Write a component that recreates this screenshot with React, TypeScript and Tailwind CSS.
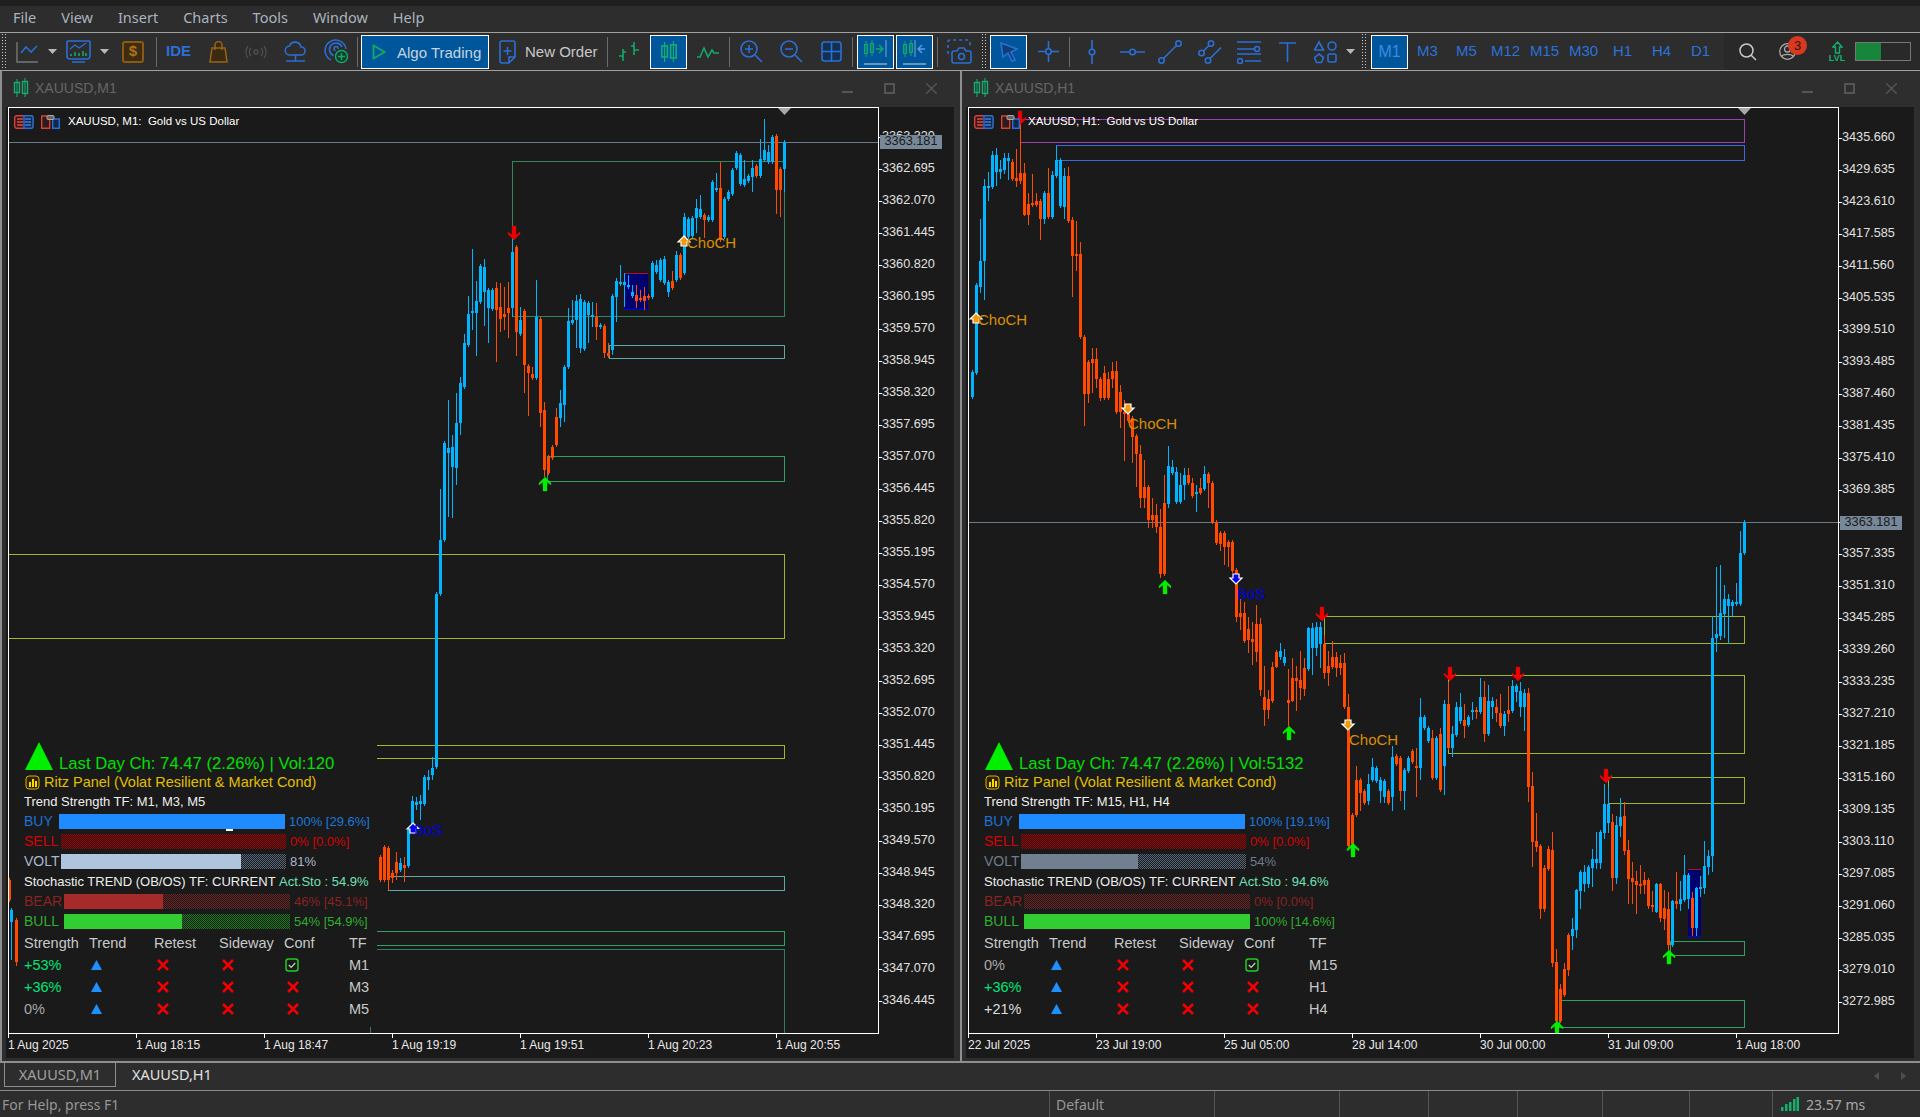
import type { ReactNode } from "react";

const BLUE = "#2a6fd6";
const GREEN = "#14a86a";
const ORANGE = "#9a6414";
const BULL = "#00b4ff";
const BEAR = "#ff4a00";
const OLIVE = "#9ab82e";
const SEA = "#2fa060";
const CADET = "#5fa8a8";

// [bodyTop, bodyBottom, bull?, wickTop, wickBottom] in page pixels, spaced 4px apart
const m1Candles: number[][] = [
  [857,880,0],[847,880,0],[848,880,0,0,890],[873,878,0,870,883],[862,873,0,852,880],[863,870,1,858,872],[865,868,0,857,882],[830,866,1],
  [801,826,1,796,828],[802,805,1,797,810],[801,804,1,795,820],[777,804,1],[777,780,1,770,790],[768,775,1,757,780],[594,767,1],[540,594,1,489,0],
  [443,540,1],[448,453,1,400,517],[447,467,1,435,518],[423,468,1,393,485],[383,423,1,377,435],[343,387,1,334,0],[314,345,1,296,0],[311,313,1,249,330],
  [301,313,1,281,356],[266,302,1],[267,292,1,259,326],[290,308,1,0,343],[290,309,1],[288,310,0,282,362],[307,319,0,283,332],[314,317,0,287,330],
  [308,313,0,282,338],[252,308,1,239,317],[247,332,0,0,356],[320,334,1,307,0],[311,365,0,0,393],[366,373,0,0,416],[374,378,0,367,0],[317,378,1,280,0],
  [319,413,0,0,427],[410,470,0,402,477],[457,473,0],[447,458,0],[417,445,0,408,0],[403,418,1,390,427],[367,405,1,0,422],[321,367,1,308,0],
  [320,323,1,300,0],[301,320,1,295,348],[299,348,1,294,353],[302,349,1],[303,315,1,0,343],[315,317,1,302,327],[317,327,0,303,340],[325,327,1],
  [326,353,0,0,358],[353,356,0,343,0],[296,350,1,0,355],[281,297,1,278,322],[282,284,1,265,0],[282,285,1,273,307],[285,287,1,275,0],[292,296,1,285,0],
  [295,301,0,285,308],[298,300,0,290,0],[296,301,0,287,310],[296,298,0],[263,297,1],[265,272,1,260,0],[260,280,1],[259,283,1,256,0],
  [282,292,1,0,297],[281,288,0,271,0],[255,280,1,251,0],[255,278,0],[217,273,1,213,0],[219,237,1],[218,236,1,0,0],[208,218,1,199,233],
  [209,217,1,195,0],[215,220,0,0,238],[217,220,1],[182,220,1],[188,190,1,173,0],[188,240,0,162,0],[199,237,1],[192,199,1],
  [170,194,1],[153,168,1],[155,184,1],[179,185,1,160,0],[176,181,1],[168,177,1,160,192],[166,176,0],[159,176,1,139,0],
  [150,160,1,119,0],[152,162,1,145,0],[137,162,1],[136,190,0,0,214],[169,190,0,0,217],[142,169,1,0,192],
];

const h1Candles: number[][] = [
  [372,397,1],[285,373,1],[261,287,1,219,293],[186,261,1,179,300],[186,187,1,172,201],[155,187,1,151,0],[155,172,1,148,186],[169,172,1,160,179],
  [158,170,1,153,174],[158,161,1,153,180],[162,179,0,159,181],[178,181,0,149,187],[173,181,0,123,184],[173,215,0,163,216],[204,215,0,193,225],[203,205,0,174,0],
  [201,205,0,193,0],[201,219,0,0,240],[193,219,1,0,224],[193,217,0,168,0],[175,217,1,171,0],[160,176,1,146,0],[160,206,1],[176,207,1,168,219],
  [176,221,0,167,0],[220,256,0,217,297],[254,256,0,221,271],[254,337,0,242,0],[337,394,0,0,426],[362,394,0,0,403],[359,363,0,348,393],[359,379,0,348,388],
  [379,398,0,0,401],[373,398,0,366,0],[379,398,0,372,0],[371,379,0,362,388],[371,412,0,361,0],[392,412,0,385,428],[412,414,0,400,461],[414,421,0,405,0],
  [418,437,0,0,463],[436,454,0,0,487],[454,498,0,445,508],[487,498,0,460,508],[487,520,0,485,528],[515,520,0,498,528],[515,527,0,504,533],[527,574,0,509,578],
  [503,574,0,475,0],[466,504,1,446,508],[467,473,1,460,0],[472,502,1,467,0],[485,502,1,473,0],[475,485,1,468,500],[475,483,0,468,0],[483,496,0,478,0],
  [492,494,1,485,512],[488,493,0,478,0],[474,489,1,466,0],[474,483,0,472,508],[483,522,0],[522,543,0],[533,544,0,0,551],[533,547,0,0,565],
  [542,547,0,540,567],[542,571,0],[570,617,0,0,622],[613,617,0,598,630],[613,641,0,602,0],[629,640,0,617,653],[639,642,0,622,665],[624,652,0,605,662],
  [624,690,0,618,696],[697,710,0,666,726],[699,710,0,690,719],[667,701,0,662,0],[652,667,0,0,668],[651,657,1,643,660],[657,663,1,649,666],[700,703,0,669,726],
  [678,701,0,658,702],[678,681,0,666,711],[680,688,0,651,700],[668,689,0,658,696],[628,669,1,627,0],[628,648,1,623,675],[627,648,1,622,656],[627,644,1,622,668],
  [644,673,0,635,679],[666,673,0,651,686],[657,667,0,641,0],[657,668,0,652,677],[663,668,0,655,675],[663,707,0,653,0],[707,846,0,694,0],[815,844,0,0,852],
  [780,815,0,766,0],[780,793,0,0,811],[791,803,0],[784,801,1,774,805],[767,780,1,758,0],[768,781,1],[780,791,1,777,803],[781,797,1,0,803],
  [791,803,0],[757,797,1,746,811],[756,764,0],[758,791,0,0,801],[770,791,1,0,810],[758,771,1],[751,762,0],[766,768,0,748,797],
  [717,768,1,698,780],[717,728,1],[728,741,1],[738,778,0,730,0],[738,778,1],[734,790,0,728,0],[704,766,1,700,795],[704,748,0,682,0],
  [734,748,1,726,757],[707,735,1,702,0],[707,721,1,693,724],[720,726,0,704,738],[717,725,1,715,727],[710,711,1,702,720],[710,712,0,707,719],[697,712,1,678,714],
  [697,734,0,681,742],[701,734,1,685,0],[701,707,1,697,719],[707,713,0,699,722],[713,726,0,694,728],[714,726,1,711,736],[710,714,0,686,722],[686,711,1,680,0],
  [686,692,1,684,702],[691,707,1,682,717],[693,707,1,689,731],[693,787,0,688,802],[786,842,0,772,867],[841,847,0,813,852],[846,909,0,0,919],[868,909,0,865,912],
  [849,869,0,846,0],[850,963,0,832,967],[962,1021,0,949,0],[989,1021,0,984,1023],[969,995,0,963,0],[935,970,0,933,976],[929,936,1,918,950],[890,930,1,889,938],
  [872,891,1,870,909],[872,884,1,865,892],[867,884,1,865,888],[859,868,1,849,887],[859,863,1,832,869],[832,863,1,0,869],[804,833,1,784,839],[804,823,1,787,833],
  [822,878,0,814,891],[825,878,1,816,884],[817,826,1,798,837],[816,851,0,802,855],[850,879,0,840,904],[878,882,0,862,904],[881,885,0,871,914],[884,885,0,865,894],
  [880,885,0,872,894],[880,906,0,0,909],[905,907,0,891,912],[884,912,1,883,913],[884,918,0,883,922],[908,919,0,890,930],[909,945,0,892,950],[901,945,1,900,947],
  [901,904,0,872,909],[899,904,1,881,911],[875,900,1,855,902],[875,899,1,0,909],[898,928,0,892,936],[888,928,1,887,936],[887,889,1,876,897],[866,888,1,841,894],
  [856,867,1,850,875],[638,856,1,616,872],[634,638,1,567,652],[613,636,1,565,640],[599,614,1,585,638],[599,606,1,594,644],[602,606,1,0,616],[602,604,1,583,0],
  [553,604,1,531,0],[522,553,1,520,555],
];

type Zone = [number, number, number, number, string];
type Marker = { x: number; y: number; kind: "up" | "down" | "bosUp" | "bosDown" | "chochUp" | "chochDown" };
type Label = { x: number; y: number; text: string; color: string };

const m1Zones: Zone[] = [
  [512, 161, 785, 316, "#34845c"],
  [609, 345, 785, 358, CADET],
  [547, 456, 785, 481, SEA],
  [2, 554, 785, 638, OLIVE],
  [370, 745, 785, 758, OLIVE],
  [388, 876, 785, 890, CADET],
  [370, 876, 388, 876, CADET],
  [370, 931, 785, 945, SEA],
  [370, 949, 785, 1040, "#2f7f5c"],
];

const h1Zones: Zone[] = [
  [1020, 119, 1745, 142, "#a040b0"],
  [1056, 145, 1745, 160, "#3f66e0"],
  [1324, 616, 1745, 643, OLIVE],
  [1448, 675, 1745, 753, OLIVE],
  [1608, 777, 1745, 803, OLIVE],
  [1670, 941, 1745, 955, SEA],
  [1559, 1000, 1745, 1027, SEA],
];

const m1Markers: Marker[] = [
  { x: 514, y: 226, kind: "down" },
  { x: 545, y: 477, kind: "up" },
  { x: 684, y: 236, kind: "chochUp" },
  { x: 413, y: 823, kind: "bosUp" },
];

const h1Markers: Marker[] = [
  { x: 1020, y: 111, kind: "down" },
  { x: 976, y: 313, kind: "chochUp" },
  { x: 1128, y: 404, kind: "chochDown" },
  { x: 1165, y: 580, kind: "up" },
  { x: 1236, y: 574, kind: "bosDown" },
  { x: 1322, y: 607, kind: "down" },
  { x: 1289, y: 726, kind: "up" },
  { x: 1348, y: 720, kind: "chochDown" },
  { x: 1353, y: 843, kind: "up" },
  { x: 1450, y: 667, kind: "down" },
  { x: 1518, y: 667, kind: "down" },
  { x: 1606, y: 769, kind: "down" },
  { x: 1557, y: 1021, kind: "up" },
  { x: 1669, y: 950, kind: "up" },
];

const m1Labels: Label[] = [
  { x: 687, y: 248, text: "ChoCH", color: "#d98e04" },
  { x: 414, y: 835, text: "BoS", color: "#0000e6" },
];

const h1Labels: Label[] = [
  { x: 978, y: 325, text: "ChoCH", color: "#d98e04" },
  { x: 1128, y: 429, text: "ChoCH", color: "#d98e04" },
  { x: 1349, y: 745, text: "ChoCH", color: "#d98e04" },
  { x: 1237, y: 599, text: "BoS", color: "#0000e6" },
];

const m1Prices = ["3363.320","3362.695","3362.070","3361.445","3360.820","3360.195","3359.570","3358.945","3358.320","3357.695","3357.070","3356.445","3355.820","3355.195","3354.570","3353.945","3353.320","3352.695","3352.070","3351.445","3350.820","3350.195","3349.570","3348.945","3348.320","3347.695","3347.070","3346.445"];
const h1Prices = ["3435.660","3429.635","3423.610","3417.585","3411.560","3405.535","3399.510","3393.485","3387.460","3381.435","3375.410","3369.385","3363.360","3357.335","3351.310","3345.285","3339.260","3333.235","3327.210","3321.185","3315.160","3309.135","3303.110","3297.085","3291.060","3285.035","3279.010","3272.985"];

function ArrowMark({ x, y, kind }: Marker) {
  if (kind === "up" || kind === "down") {
    const fill = kind === "up" ? "#00f000" : "#ee0000";
    const pts =
      kind === "up"
        ? `${x},${y} ${x + 6},${y + 6} ${x + 6},${y + 8} ${x + 2},${y + 5} ${x + 2},${y + 14} ${x - 2},${y + 14} ${x - 2},${y + 5} ${x - 6},${y + 8} ${x - 6},${y + 6}`
        : `${x - 2},${y} ${x + 2},${y} ${x + 2},${y + 9} ${x + 6},${y + 6} ${x + 6},${y + 8} ${x},${y + 14} ${x - 6},${y + 8} ${x - 6},${y + 6} ${x - 2},${y + 9}`;
    return <polygon points={pts} fill={fill} stroke={fill} strokeOpacity="0.3" />;
  }
  const fill = kind.startsWith("bos") ? "#0000ee" : "#f09a10";
  const up = kind.endsWith("Up");
  const pts = up
    ? `${x},${y} ${x + 6},${y + 6} ${x + 3},${y + 6} ${x + 3},${y + 10} ${x - 3},${y + 10} ${x - 3},${y + 6} ${x - 6},${y + 6}`
    : `${x - 3},${y} ${x + 3},${y} ${x + 3},${y + 4} ${x + 6},${y + 4} ${x},${y + 10} ${x - 6},${y + 4} ${x - 3},${y + 4}`;
  return <polygon points={pts} fill={fill} stroke="#ffffff" strokeWidth="1.2" />;
}

function CandleBar({ x, c }: { x: number; c: number[] }) {
  const color = c[2] ? BULL : BEAR;
  const top = c[3] || c[0] - 2;
  const bottom = c[4] || c[1] + 2;
  return (
    <g fill={color}>
      <rect x={x} y={top} width="1" height={bottom - top} />
      <rect x={x - 1} y={c[0]} width="3" height={Math.max(c[1] - c[0], 2)} />
    </g>
  );
}

function ChartDrawing(props: {
  left: number;
  start: number;
  bid: number;
  candles: number[][];
  extras?: number[][];
  zones: Zone[];
  box: number[];
  markers: Marker[];
  labels: Label[];
  peak: number;
}) {
  const { left, start, bid, candles, extras, zones, box, markers, labels, peak } = props;
  return (
    <svg
      width="869"
      height="925"
      viewBox={`${left} 108 869 925`}
      className="block"
      shapeRendering="crispEdges"
    >
      {zones.map((z, i) => (
        <rect key={i} x={z[0] + 0.5} y={z[1] + 0.5} width={z[2] - z[0] - 1} height={z[3] - z[1]} fill="none" stroke={z[4]} />
      ))}
      <rect x={left} y={bid} width="869" height="1" fill="#6d7b88" />
      <rect x={box[0]} y={box[1]} width={box[2] - box[0]} height={box[3] - box[1]} fill="#00006e" />
      <rect x={box[0]} y={box[1]} width={box[2] - box[0]} height="1" fill="#b01030" />
      <rect x={box[0]} y={box[3] - 1} width={box[2] - box[0]} height="1" fill="#0000e6" />
      {candles.map((c, i) => (
        <CandleBar key={i} x={start + 4 * i} c={c} />
      ))}
      {extras?.map((c, i) => (
        <CandleBar key={i} x={c[5]} c={c} />
      ))}
      <g shapeRendering="auto">
        <polygon points={`${peak - 7},108 ${peak + 6},108 ${peak - 0.5},115`} fill="#a8a8a8" />
        {markers.map((m, i) => (
          <ArrowMark key={i} {...m} />
        ))}
        {labels.map((l, i) => (
          <text key={i} x={l.x} y={l.y} fill={l.color} fontSize="15" fontFamily="Liberation Sans, sans-serif">
            {l.text}
          </text>
        ))}
      </g>
    </svg>
  );
}

function HeaderIcons() {
  return (
    <svg width="46" height="14" viewBox="0 0 46 14" className="shrink-0">
      <rect x="0.7" y="0.7" width="18" height="12.6" rx="2" fill="#321a1a" stroke="#d8403a" strokeWidth="1.4" />
      <path d="M10 0.7h7a2 2 0 012 2v8.6a2 2 0 01-2 2h-7z" fill="#14264a" stroke={BLUE} strokeWidth="1.4" />
      <path d="M3 4h6M3 7h6M3 10h6" stroke="#e8483e" strokeWidth="1.4" />
      <path d="M11 4h6M11 7h6M11 10h6" stroke="#3a82e6" strokeWidth="1.4" />
      <path d="M27.7 1h5l3 3v9.3h-8z" fill="#321a1a" stroke="#d8403a" strokeWidth="1.4" />
      <path d="M38.7 4h6.6v9.3h-6.6z" fill="#14264a" stroke={BLUE} strokeWidth="1.4" />
      <rect x="33" y="0.5" width="7" height="4" rx="1" fill="#666" stroke="#aaa" />
    </svg>
  );
}

const ditherRed = "bg-[conic-gradient(#a80000_25%,#1a1a1a_0_50%,#a80000_0_75%,#1a1a1a_0)] bg-[length:2px_2px]";
const ditherBrown = "bg-[conic-gradient(#6e2222_25%,#1a1a1a_0_50%,#6e2222_0_75%,#1a1a1a_0)] bg-[length:2px_2px]";
const ditherGreen = "bg-[conic-gradient(#1a7c1a_25%,#1a1a1a_0_50%,#1a7c1a_0_75%,#1a1a1a_0)] bg-[length:2px_2px]";
const ditherSlate = "bg-[conic-gradient(#55657a_25%,#1a1a1a_0_50%,#55657a_0_75%,#1a1a1a_0)] bg-[length:2px_2px]";

function Bar(props: {
  name: string;
  nameClass: string;
  track: string;
  fill: string;
  pct: number;
  text: string;
  textClass: string;
  blip?: boolean;
}) {
  return (
    <div className="flex h-5 items-center">
      <span className={props.nameClass}>{props.name}</span>
      <div className={`relative h-[15px] ${props.track}`}>
        <div className={`h-full ${props.fill}`} style={{ width: `${props.pct}%` }} />
        {props.blip && <span className="absolute left-[167px] bottom-[-2px] h-[2px] w-[7px] bg-white" />}
      </div>
      <span className={`ml-[4px] whitespace-pre ${props.textClass}`}>{props.text}</span>
    </div>
  );
}

function UpTriangle() {
  return (
    <svg width="11" height="10" viewBox="0 0 11 10" className="ml-[2px]">
      <polygon points="5.5,0 11,10 0,10" fill="#1e90ff" />
    </svg>
  );
}

function RedCross() {
  return (
    <svg width="12" height="12" viewBox="0 0 12 12" className="ml-[3px]">
      <path d="M1 1l10 10M11 1L1 11" stroke="#f00000" strokeWidth="2.6" />
    </svg>
  );
}

function GreenCheck() {
  return (
    <svg width="14" height="14" viewBox="0 0 14 14" className="ml-[1px]">
      <rect x="1" y="1" width="12" height="12" rx="2.5" fill="none" stroke="#22cc22" strokeWidth="1.5" />
      <path d="M3.8 7l2.4 2.4 4-4.4" fill="none" stroke="#b9d8b9" strokeWidth="1.2" />
    </svg>
  );
}

type PanelRow = { strength: string; color: string; tf: string; conf?: boolean };

function RitzPanel(props: {
  vol: string;
  trendTf: string;
  buy: string;
  volt: number;
  voltBar: number;
  voltFill: string;
  voltText: string;
  sto: string;
  bearBar: number;
  bearText: string;
  bullBar: number;
  bullText: string;
  rows: PanelRow[];
  blip?: boolean;
}) {
  return (
    <div className="absolute left-[11px] top-[633px] h-[286px] w-[357px] bg-[#1a1a1a] pl-[4px] text-[13px] leading-none text-[#eeeeee]">
      <div className="flex h-[31px] items-start">
        <svg width="30" height="28" viewBox="0 0 30 28" className="mt-px shrink-0">
          <polygon points="15,0 29,28 1,28" fill="#00f000" />
        </svg>
        <span className="ml-[5px] mt-[14px] whitespace-pre text-[16.7px] leading-[18px] text-[#00e000]">
          Last Day Ch: 74.47 (2.26%) | Vol:{props.vol}
        </span>
      </div>
      <div className="flex h-5 items-center">
        <svg width="15" height="15" viewBox="0 0 15 15" className="ml-[1px] shrink-0">
          <rect x="1" y="1" width="13" height="13" rx="3" fill="#2c2408" stroke="#d8b000" />
          <path d="M4 12V7h2v5zM7 12V4h2v8zM10 12V6h2v6z" fill="#ffd700" />
        </svg>
        <span className="ml-[4px] whitespace-pre text-[14.5px] text-[#e0bf00]">Ritz Panel (Volat Resilient &amp; Market Cond)</span>
      </div>
      <div className="flex h-[19px] items-center whitespace-pre">Trend Strength TF: {props.trendTf}</div>
      <Bar
        name="BUY"
        nameClass="w-[35px] text-[14px] text-[#1c72d8]"
        track="w-[226px]"
        fill="bg-[#1e8cff]"
        pct={100}
        text={props.buy}
        textClass="text-[#1c78dc]"
        blip={props.blip}
      />
      <Bar
        name="SELL"
        nameClass="w-[37px] text-[14px] text-[#d80000]"
        track={`w-[225px] ${ditherRed}`}
        fill=""
        pct={0}
        text="0% [0.0%]"
        textClass="text-[#d80000]"
      />
      <Bar
        name="VOLT"
        nameClass={`w-[37px] text-[14px] ${props.voltText}`}
        track={`w-[225px] ${ditherSlate}`}
        fill={props.voltFill}
        pct={props.voltBar}
        text={`${props.volt}%`}
        textClass={props.voltText}
      />
      <div className="flex h-5 items-center whitespace-pre">
        Stochastic TREND (OB/OS) TF: CURRENT <span className="text-[#72e0b4]">Act.Sto : {props.sto}</span>
      </div>
      <Bar
        name="BEAR"
        nameClass="w-[40px] text-[14px] text-[#8a2222]"
        track={`w-[226px] ${ditherBrown}`}
        fill="bg-[#a52a2a]"
        pct={props.bearBar}
        text={props.bearText}
        textClass="text-[#8a2222]"
      />
      <Bar
        name="BULL"
        nameClass="w-[40px] text-[14px] text-[#2fae2f]"
        track={`w-[226px] ${ditherGreen}`}
        fill="bg-[#32cd32]"
        pct={props.bullBar}
        text={props.bullText}
        textClass="text-[#2fae2f]"
      />
      <div className="mt-px grid grid-cols-[65px_65px_65px_65px_65px_auto] auto-rows-[22px] items-center text-[14.5px] text-[#c8c8c8]">
        <span>Strength</span>
        <span>Trend</span>
        <span>Retest</span>
        <span>Sideway</span>
        <span>Conf</span>
        <span>TF</span>
        {props.rows.map((r) => (
          <div key={r.tf} className="contents">
            <span className={r.color}>{r.strength}</span>
            <UpTriangle />
            <RedCross />
            <RedCross />
            {r.conf ? <GreenCheck /> : <RedCross />}
            <span>{r.tf}</span>
          </div>
        ))}
      </div>
    </div>
  );
}

function CandleIcon({ size = 16 }: { size?: number }) {
  return (
    <svg width={size} height={size + 4} viewBox="0 0 16 20" className="shrink-0">
      <path d="M4 1v18M12 0v19" stroke="#14b070" />
      <rect x="1.5" y="4.5" width="5" height="10" fill="none" stroke="#14b070" strokeWidth="1.4" />
      <rect x="9.5" y="3.5" width="5" height="12" fill="none" stroke="#14b070" strokeWidth="1.4" />
    </svg>
  );
}

function ChartWindow(props: {
  title: string;
  header: string;
  priceTop: string;
  prices: string[];
  times: string[];
  tagTop: string;
  children: ReactNode;
}) {
  return (
    <section className="flex h-full w-[960px] flex-col border-b-2 border-l-2 border-[#8f8f8f] bg-[#2e2e2e]">
      <div className="flex h-9 items-center pb-[2px] pl-[11px]">
        <CandleIcon />
        <span className="ml-[6px] text-[14px] text-[#666666]">{props.title}</span>
        <div className="ml-auto mr-[23px] flex items-center gap-[31px] text-[#555555]">
          <span className="mt-[8px] h-[2px] w-[11px] bg-[#555555]" />
          <span className="h-[11px] w-[11px] border-2 border-[#555555]" />
          <svg width="11" height="11" viewBox="0 0 11 11">
            <path d="M0 0l11 11M11 0L0 11" stroke="#555555" strokeWidth="1.4" />
          </svg>
        </div>
      </div>
      <div className="ml-[4px] h-[951px] w-[948px] bg-[#1a1a1a] pl-[2px]">
        <div className="relative flex h-[927px]">
          <div className="relative h-[927px] w-[871px] border border-white">
            {props.children}
            <div className="absolute left-[5px] top-[5px] flex items-center whitespace-pre text-[11.5px] text-white">
              <HeaderIcons />
              <span className="ml-[8px]">{props.header}</span>
            </div>
          </div>
          <div className={`flex flex-col text-[12.7px] text-[#e0e0e0] ${props.priceTop}`}>
            {props.prices.map((p) => (
              <div key={p} className="flex h-8 items-center">
                <span className="h-px w-[3px] bg-white" />
                <span>{p}</span>
              </div>
            ))}
          </div>
          <div className={`absolute left-[872px] flex h-[14px] w-[62px] items-center justify-center bg-[#778899] text-[12.7px] text-[#1a1a1a] ${props.tagTop}`}>
            3363.181
          </div>
        </div>
        <div className="flex h-6 text-[12px] text-[#e8e8e8]">
          {props.times.map((t) => (
            <div key={t} className="h-[4px] w-[128px] whitespace-pre border-l border-white">
              <span className="ml-[-1px] mt-[3px] block leading-[16px]">{t}</span>
            </div>
          ))}
        </div>
      </div>
    </section>
  );
}

const Sep = () => <span className="h-[30px] w-px shrink-0 bg-[#6a6a6a]" />;
const Caret = () => (
  <svg width="9" height="5" viewBox="0 0 9 5" className="shrink-0">
    <polygon points="0,0 9,0 4.5,5" fill="#b8b8b8" />
  </svg>
);
const Grip = () => (
  <span className="h-[37px] w-[6px] shrink-0 bg-[radial-gradient(#c8c8c8_40%,transparent_45%)] bg-[length:3px_3px]" />
);

function Slot({ className, children }: { className: string; children?: ReactNode }) {
  return <div className={`flex h-full shrink-0 items-center justify-center ${className}`}>{children}</div>;
}

function ActiveBtn({ className = "w-[37px]", children }: { className?: string; children: ReactNode }) {
  return (
    <div className={`flex h-[34px] shrink-0 items-center justify-center border border-white bg-[#00569a] ${className}`}>
      {children}
    </div>
  );
}

const stroke = { fill: "none", stroke: BLUE, strokeWidth: 1.6 };

function Toolbar() {
  return (
    <div className="flex h-[39px] items-center border-y border-[#a0a0a0] bg-[#2d2d2d] text-[#c8c8c8]">
      <Slot className="w-[8px]"><Grip /></Slot>
      <Slot className="w-[38px]">
        <svg width="23" height="22" viewBox="0 0 23 22">
          <path d="M1 1v20h21" fill="none" stroke="#777777" strokeWidth="1.4" />
          <path d="M5 12l5-6 5 5 6-6" {...stroke} />
        </svg>
      </Slot>
      <Slot className="w-[12px]"><Caret /></Slot>
      <Slot className="w-[40px]">
        <svg width="25" height="24" viewBox="0 0 25 24">
          <path d="M2 1h21a1 1 0 011 1v14a3 3 0 01-3 3H4a3 3 0 01-3-3V2a1 1 0 011-1zM6 22h13" {...stroke} />
          <path d="M4 9l5-4 4 3 7-5" {...stroke} strokeWidth="1.3" />
          <path d="M5 16v-2M9 16v-4M13 16v-3M17 16v-5M20 16v-3" stroke={GREEN} strokeWidth="1.6" />
        </svg>
      </Slot>
      <Slot className="w-[12px]"><Caret /></Slot>
      <Slot className="w-[46px]">
        <span className="flex h-[22px] w-[22px] items-center justify-center rounded-[3px] border-2 border-[#8a5a14] bg-[#3d2c12] text-[15px] font-bold text-[#b07416]">$</span>
      </Slot>
      <Sep />
      <Slot className="w-[43px]"><span className="text-[15px] font-semibold text-[#2a6fd6]">IDE</span></Slot>
      <Slot className="w-[36px]">
        <svg width="19" height="22" viewBox="0 0 19 22">
          <path d="M3 7h13l2 14H1zM6 9V4a3.5 3.5 0 017 0v5" fill="#3a2a12" stroke={ORANGE} strokeWidth="1.5" />
        </svg>
      </Slot>
      <Slot className="w-[39px]">
        <svg width="22" height="14" viewBox="0 0 22 14" fill="none" stroke="#4e4e4e" strokeWidth="1.4">
          <circle cx="11" cy="7" r="2" />
          <path d="M6 3a6 6 0 000 8M16 3a6 6 0 010 8M3 1a10 10 0 000 12M19 1a10 10 0 010 12" />
        </svg>
      </Slot>
      <Slot className="w-[40px]">
        <svg width="23" height="22" viewBox="0 0 23 22">
          <path d="M6 14a4.5 4.5 0 01-.5-9 6 6 0 0111.5 1 4 4 0 010 8zM11.5 14v6M2 20h19" {...stroke} />
        </svg>
      </Slot>
      <Slot className="w-[42px]">
        <svg width="25" height="25" viewBox="0 0 25 25">
          <path d="M7 21A10.5 10.5 0 1122 10M9.5 16.5A6.5 6.5 0 1118 8M11.5 11.5A2 2 0 1114 10" {...stroke} />
          <circle cx="17.5" cy="17.5" r="6" fill="#123a28" stroke={GREEN} strokeWidth="1.5" />
          <path d="M17.5 14v7M14 17.5h7" stroke={GREEN} strokeWidth="1.5" />
        </svg>
      </Slot>
      <Sep />
      <span className="w-[3px] shrink-0" />
      <ActiveBtn className="w-[128px] justify-start">
        <svg width="14" height="16" viewBox="0 0 14 16" className="ml-[10px]">
          <polygon points="1.5,1.5 12.5,8 1.5,14.5" fill="none" stroke={GREEN} strokeWidth="1.8" />
        </svg>
        <span className="ml-[11px] mt-[3px] whitespace-pre text-[15px] text-[#c5d3e2]">Algo Trading</span>
      </ActiveBtn>
      <Slot className="w-[118px] justify-start pl-[10px]">
        <svg width="17" height="24" viewBox="0 0 17 24">
          <path d="M3 1h11a2 2 0 012 2v14l-6 6H3a2 2 0 01-2-2V3a2 2 0 012-2zM10 23v-6h6" {...stroke} />
          <path d="M8.5 7v8M4.5 11h8" {...stroke} />
        </svg>
        <span className="ml-[9px] mt-px whitespace-pre text-[15px]">New Order</span>
      </Slot>
      <Sep />
      <Slot className="w-[42px]">
        <svg width="22" height="20" viewBox="0 0 22 20" fill="none" stroke={GREEN} strokeWidth="1.6">
          <path d="M5 7v12M1 14h4M5 10h3M16 0v13M13 4h3M16 8h5" />
        </svg>
      </Slot>
      <ActiveBtn><CandleIcon size={18} /></ActiveBtn>
      <Slot className="w-[42px]">
        <svg width="22" height="14" viewBox="0 0 22 14" fill="none" stroke={GREEN} strokeWidth="1.6">
          <path d="M0 12h3l4-9 4 9 4-7 2 3h5" />
        </svg>
      </Slot>
      <Sep />
      <Slot className="w-[42px]">
        <svg width="23" height="23" viewBox="0 0 23 23"><circle cx="9" cy="9" r="8" {...stroke} /><path d="M15 15l7 7M9 5v8M5 9h8" {...stroke} /></svg>
      </Slot>
      <Slot className="w-[38px]">
        <svg width="23" height="23" viewBox="0 0 23 23"><circle cx="9" cy="9" r="8" {...stroke} /><path d="M15 15l7 7M5 9h8" {...stroke} /></svg>
      </Slot>
      <Slot className="w-[42px]">
        <svg width="21" height="21" viewBox="0 0 21 21">
          <rect x="1" y="1" width="19" height="19" rx="2.5" fill="#14304f" stroke={BLUE} strokeWidth="1.6" />
          <path d="M10.5 1v19M1 10.5h19" {...stroke} />
        </svg>
      </Slot>
      <Sep />
      <span className="w-[4px] shrink-0" />
      <ActiveBtn>
        <svg width="25" height="28" viewBox="0 0 25 28" fill="none">
          <path d="M3 3v16M9 2v16" stroke={GREEN} /><rect x="1.5" y="6.5" width="3" height="9" stroke={GREEN} /><rect x="7.5" y="5.5" width="3" height="9" stroke={GREEN} />
          <path d="M13 11h6M16 7l4 4-4 4" stroke={GREEN} strokeWidth="1.4" />
          <path d="M23 2v17" stroke="#7aa4d8" /><path d="M1 26h23" stroke="#9ab0c8" strokeWidth="1.4" />
        </svg>
      </ActiveBtn>
      <span className="w-[2px] shrink-0" />
      <ActiveBtn>
        <svg width="25" height="28" viewBox="0 0 25 28" fill="none">
          <path d="M3 3v16M9 2v16" stroke={GREEN} /><rect x="1.5" y="6.5" width="3" height="9" stroke={GREEN} /><rect x="7.5" y="5.5" width="3" height="9" stroke={GREEN} />
          <path d="M13 2v17" stroke="#7aa4d8" /><path d="M23 11h-6M20 7l-4 4 4 4" stroke="#5f9be8" strokeWidth="1.4" />
          <path d="M1 26h23" stroke="#9ab0c8" strokeWidth="1.4" />
        </svg>
      </ActiveBtn>
      <span className="w-[4px] shrink-0" />
      <Sep />
      <Slot className="w-[42px]">
        <svg width="25" height="25" viewBox="0 0 25 25">
          <path d="M1 15V3a2 2 0 012-2h18a2 2 0 012 2v5" {...stroke} strokeDasharray="3 3" />
          <path d="M7 12h3l2-3h5l2 3h3a2 2 0 012 2v8a2 2 0 01-2 2H7a2 2 0 01-2-2v-8a2 2 0 012-2z" {...stroke} />
          <circle cx="14.5" cy="17.5" r="3" {...stroke} />
        </svg>
      </Slot>
      <Slot className="w-[8px]"><Grip /></Slot>
      <span className="w-[2px] shrink-0" />
      <ActiveBtn>
        <svg width="18" height="20" viewBox="0 0 18 20"><path d="M1 1l16 6-6 3 4 8-3 1-4-8-5 4z" fill="#0d3f73" stroke={BLUE} strokeWidth="1.6" /></svg>
      </ActiveBtn>
      <Slot className="w-[42px]">
        <svg width="21" height="21" viewBox="0 0 21 21"><path d="M10.5 0v7.5M10.5 13.5V21M0 10.5h7.5M13.5 10.5H21" {...stroke} /><circle cx="10.5" cy="10.5" r="2.8" {...stroke} /></svg>
      </Slot>
      <Sep />
      <Slot className="w-[44px]">
        <svg width="8" height="24" viewBox="0 0 8 24"><path d="M4 0v9M4 15v9" {...stroke} /><circle cx="4" cy="12" r="2.8" {...stroke} /></svg>
      </Slot>
      <Slot className="w-[36px]">
        <svg width="25" height="8" viewBox="0 0 25 8"><path d="M0 4h9.5M15.5 4H25" {...stroke} /><circle cx="12.5" cy="4" r="2.8" {...stroke} /></svg>
      </Slot>
      <Slot className="w-[40px]">
        <svg width="24" height="24" viewBox="0 0 24 24"><circle cx="20.5" cy="3.5" r="2.7" {...stroke} /><circle cx="3.5" cy="20.5" r="2.7" {...stroke} /><path d="M5.5 18.5l13-13" {...stroke} /></svg>
      </Slot>
      <Slot className="w-[40px]">
        <svg width="24" height="24" viewBox="0 0 24 24"><circle cx="13" cy="3.5" r="2.7" {...stroke} /><circle cx="3.5" cy="13" r="2.7" {...stroke} /><circle cx="10" cy="20.5" r="2.7" {...stroke} /><path d="M5.5 11l5.5-5.5M12 18.5l11-11" {...stroke} /></svg>
      </Slot>
      <Slot className="w-[38px]">
        <svg width="24" height="24" viewBox="0 0 24 24"><path d="M0 2h24M0 9h17M0 14h24M8 21h16" {...stroke} /><circle cx="20" cy="9" r="2.5" {...stroke} /><circle cx="3" cy="21" r="2.5" {...stroke} /></svg>
      </Slot>
      <Slot className="w-[38px]">
        <svg width="17" height="21" viewBox="0 0 17 21"><path d="M0 2h17M8.5 2v19" {...stroke} /></svg>
      </Slot>
      <Slot className="w-[38px]">
        <svg width="23" height="24" viewBox="0 0 23 24">
          <path d="M5 2l4.5 8H.5z" {...stroke} /><circle cx="18" cy="6" r="4" {...stroke} />
          <path d="M5 14l4.5 3.5-2 5h-5l-2-5z" {...stroke} /><rect x="14" y="14" width="8" height="8" rx="1.5" {...stroke} />
        </svg>
      </Slot>
      <Slot className="w-[12px]"><Caret /></Slot>
      <Slot className="w-[15px]"><Grip /></Slot>
      <ActiveBtn><span className="text-[16px] text-[#3b8ae6]">M1</span></ActiveBtn>
      <div className="flex h-full shrink-0 items-center text-[15px] text-[#2a72dc]">
        {["M3", "M5", "M12", "M15", "M30", "H1", "H4", "D1"].map((tf) => (
          <span key={tf} className="w-[39px] text-center">{tf}</span>
        ))}
      </div>
      <div className="ml-[4px] flex h-full flex-1 items-center bg-[#292929]">
        <svg width="18" height="18" viewBox="0 0 18 18" className="ml-[15px]" fill="none" stroke="#c8c8c8" strokeWidth="1.5">
          <circle cx="7.5" cy="7.5" r="6.5" /><path d="M12 12l5 5" />
        </svg>
        <div className="relative ml-[22px]">
          <svg width="17" height="19" viewBox="0 0 17 19" fill="none" stroke="#a8a8a8" strokeWidth="1.3">
            <circle cx="8.5" cy="9.5" r="7.8" /><circle cx="8.5" cy="7" r="3" /><path d="M2.5 15c1-3.5 11-3.5 12 0" />
          </svg>
          <span className="absolute left-[9px] top-[-6px] flex h-[19px] w-[19px] items-center justify-center rounded-full bg-[#d83a20] text-[13px] text-[#3a1008]">3</span>
        </div>
        <div className="ml-[31px] flex w-[20px] flex-col items-center text-[9px] font-bold leading-none text-[#14b070]">
          <svg width="11" height="13" viewBox="0 0 11 13" fill="none" stroke="#14b070" strokeWidth="1.4"><path d="M5.5 1l4.5 5H7.5v6h-4V6H1z" /></svg>
          <span>LVL</span>
        </div>
        <div className="ml-[8px] flex h-[19px] w-[56px] border border-[#777777]">
          <span className="w-[25px] bg-[#17853a]" />
        </div>
      </div>
    </div>
  );
}

export default function App() {
  return (
    <div className="flex h-[1117px] w-[1920px] flex-col overflow-hidden bg-[#2d2d2d] font-['Liberation_Sans',Arial,sans-serif]">
      <div className="h-[6px] bg-[#1f1f1f]" />
      <nav className="flex h-[26px] items-center gap-[25px] pb-[2px] pl-[13px] font-['Noto_Sans',sans-serif] text-[14.5px] text-[#a9b4bf]">
        <span>File</span>
        <span>View</span>
        <span>Insert</span>
        <span>Charts</span>
        <span>Tools</span>
        <span>Window</span>
        <span>Help</span>
      </nav>
      <Toolbar />
      <main className="flex h-[992px]">
        <ChartWindow
          title="XAUUSD,M1"
          header="XAUUSD, M1:  Gold vs US Dollar"
          priceTop="pt-[14px]"
          tagTop="top-[28px]"
          prices={m1Prices}
          times={["1 Aug 2025", "1 Aug 18:15", "1 Aug 18:47", "1 Aug 19:19", "1 Aug 19:51", "1 Aug 20:23", "1 Aug 20:55"]}
        >
          <ChartDrawing
            left={9}
            start={380}
            bid={142}
            candles={m1Candles}
            extras={[[910, 922, 1, 0, 960, 11], [920, 962, 0, 0, 966, 16], [880, 900, 0, 0, 0, 9]]}
            zones={m1Zones}
            box={[624, 273, 648, 310]}
            markers={m1Markers}
            labels={m1Labels}
            peak={785}
          />
          <RitzPanel
            vol="120"
            trendTf="M1, M3, M5"
            buy="100% [29.6%]"
            volt={81}
            voltBar={80}
            voltFill="bg-[#b0c4de]"
            voltText="text-[#a9b8cc]"
            sto="54.9%"
            bearBar={44}
            bearText="46% [45.1%]"
            bullBar={52}
            bullText="54% [54.9%]"
            blip
            rows={[
              { strength: "+53%", color: "text-[#00e676]", tf: "M1", conf: true },
              { strength: "+36%", color: "text-[#00e676]", tf: "M3" },
              { strength: "0%", color: "text-[#a8a8a8]", tf: "M5" },
            ]}
          />
        </ChartWindow>
        <ChartWindow
          title="XAUUSD,H1"
          header="XAUUSD, H1:  Gold vs US Dollar"
          priceTop="pt-[15px]"
          tagTop="top-[409px]"
          prices={h1Prices}
          times={["22 Jul 2025", "23 Jul 19:00", "25 Jul 05:00", "28 Jul 14:00", "30 Jul 00:00", "31 Jul 09:00", "1 Aug 18:00"]}
        >
          <ChartDrawing
            left={969}
            start={972}
            bid={522}
            candles={h1Candles}
            zones={h1Zones}
            box={[1688, 869, 1701, 937]}
            markers={h1Markers}
            labels={h1Labels}
            peak={1745}
          />
          <RitzPanel
            vol="5132"
            trendTf="M15, H1, H4"
            buy="100% [19.1%]"
            volt={54}
            voltBar={52}
            voltFill="bg-[#708090]"
            voltText="text-[#6e7c8c]"
            sto="94.6%"
            bearBar={0}
            bearText="0% [0.0%]"
            bullBar={100}
            bullText="100% [14.6%]"
            rows={[
              { strength: "0%", color: "text-[#a8a8a8]", tf: "M15", conf: true },
              { strength: "+36%", color: "text-[#00e676]", tf: "H1" },
              { strength: "+21%", color: "text-[#dddddd]", tf: "H4" },
            ]}
          />
        </ChartWindow>
      </main>
      <div className="flex h-[28px] items-start border-b border-[#8a8a8a] font-['Noto_Sans',sans-serif] text-[14.5px]">
        <div className="ml-[4px] flex h-[24px] w-[112px] items-center justify-center border border-t-0 border-[#8f8f8f] text-[#a0a0a0]">XAUUSD,M1</div>
        <div className="ml-[16px] flex h-[24px] items-center text-[#e0e0e0]">XAUUSD,H1</div>
        <div className="ml-auto mr-[14px] mt-[9px] flex gap-[22px]">
          <span className="h-0 w-0 border-y-[4px] border-r-[5px] border-y-transparent border-r-[#4f4f4f]" />
          <span className="h-0 w-0 border-y-[4px] border-l-[5px] border-y-transparent border-l-[#4f4f4f]" />
        </div>
      </div>
      <footer className="flex h-[26px] items-center font-['Noto_Sans',sans-serif] text-[14px] text-[#969696]">
        <div className="w-[1049px] pl-[2px]">For Help, press F1</div>
        <div className="flex h-full w-[165px] items-center border-l border-[#555555] pl-[6px]">Default</div>
        <div className="h-full w-[125px] border-l border-[#555555]" />
        <div className="h-full w-[89px] border-l border-[#555555]" />
        <div className="h-full w-[89px] border-l border-[#555555]" />
        <div className="h-full w-[85px] border-l border-[#555555]" />
        <div className="h-full w-[87px] border-l border-[#555555]" />
        <div className="h-full w-[83px] border-l border-[#555555]" />
        <div className="flex h-full flex-1 items-center border-l border-[#555555] pl-[8px]">
          <svg width="18" height="14" viewBox="0 0 18 14" fill="#14b070">
            <rect x="0" y="10" width="2.5" height="4" /><rect x="4" y="7" width="2.5" height="7" /><rect x="8" y="5" width="2.5" height="9" /><rect x="12" y="2" width="2.5" height="12" /><rect x="15.5" y="0" width="2.5" height="14" />
          </svg>
          <span className="ml-[7px] whitespace-pre text-[#a8a8a8]">23.57 ms</span>
        </div>
      </footer>
    </div>
  );
}
